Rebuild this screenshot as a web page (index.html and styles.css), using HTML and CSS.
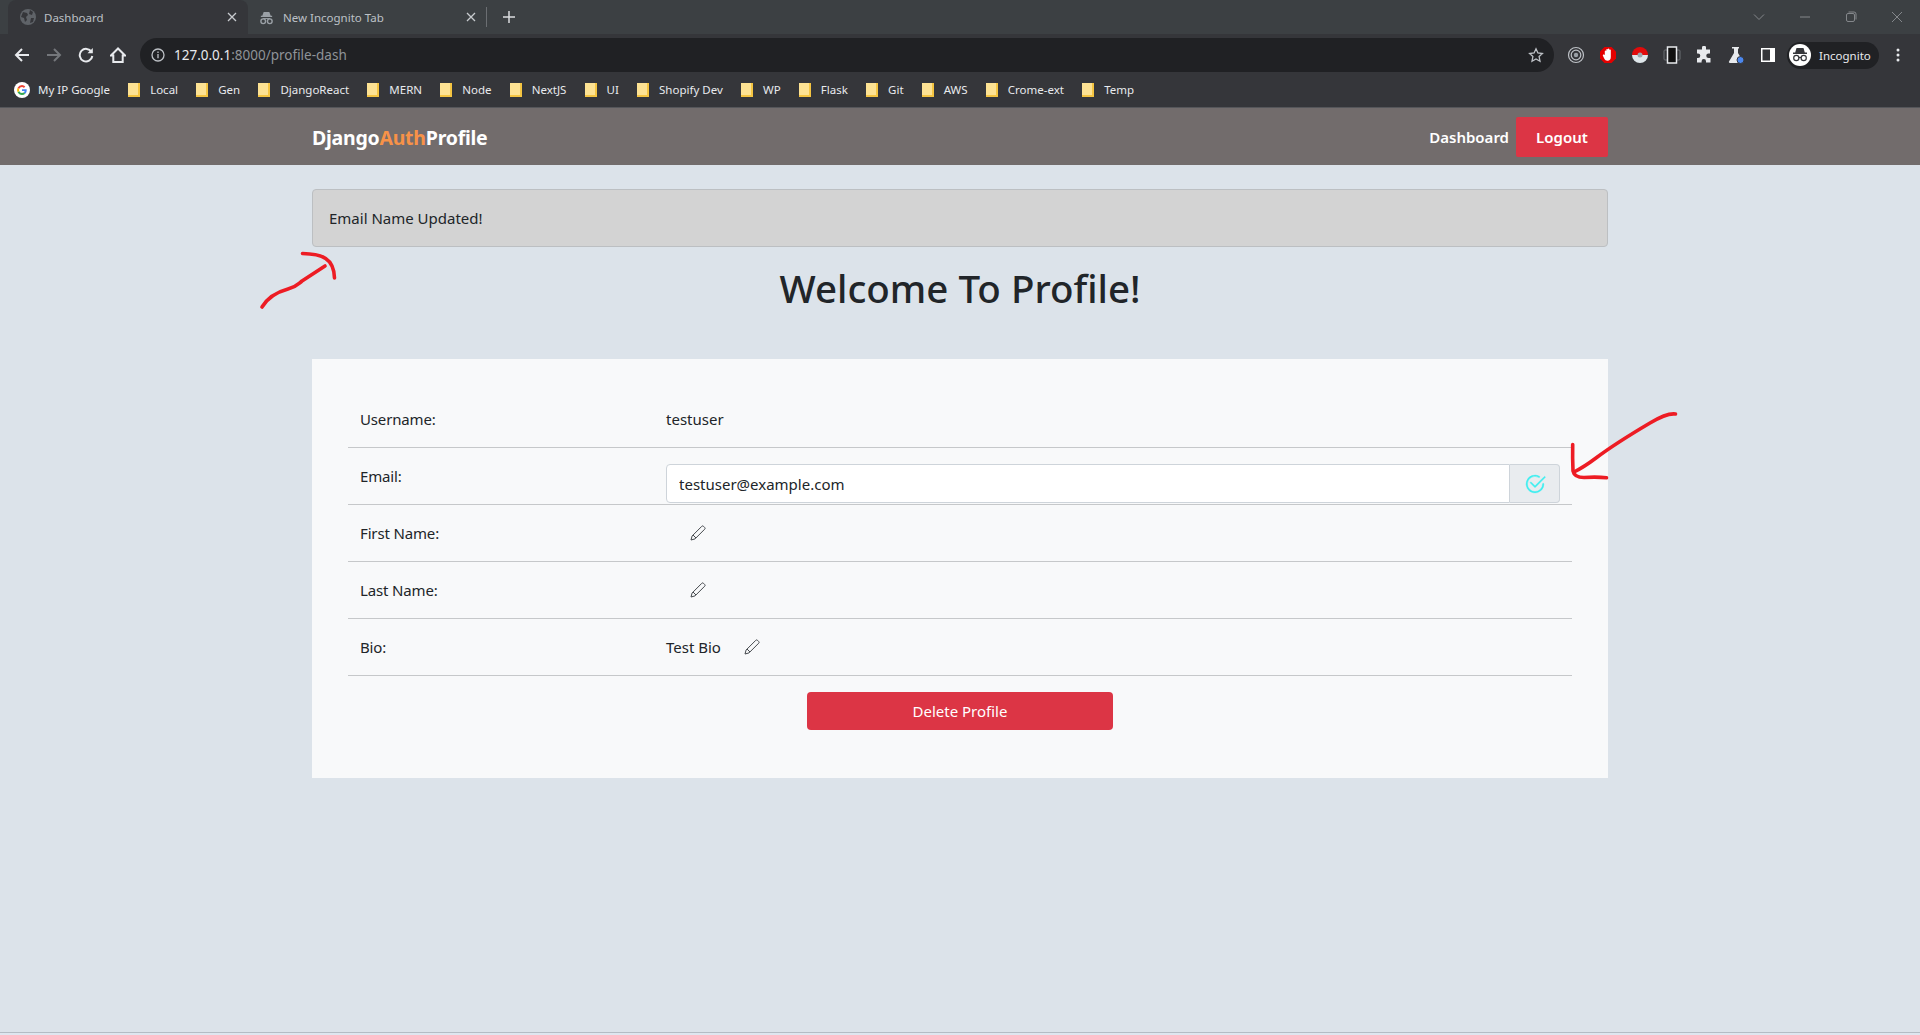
FILE: index.html
```html
<!DOCTYPE html>
<html lang="en">
<head>
<meta charset="utf-8">
<title>Dashboard</title>
<link rel="stylesheet" href="styles.css">
</head>
<body>
<header class="chrome">
  <div class="tabstrip">
    <div class="tab tab-active">
      <svg class="tab-ico" viewBox="0 0 16 16"><circle cx="8" cy="8" r="8" fill="#5f6368"/><path d="M3 3l4 1 1 2-2 2 1 3-2 2-1-4-3-1zM10 1l3 2-1 3-3-1zM11 9l3 0-1 4-3 1z" fill="#35363a"/></svg>
      <span class="tab-title">Dashboard</span>
      <svg class="tab-close" viewBox="0 0 10 10"><path d="M1 1l8 8M9 1l-8 8"/></svg>
    </div>
    <div class="tab tab-idle">
      <svg class="tab-ico" viewBox="0 0 16 16"><path d="M5 2h6l1.500 4H14v1.500H2V6h1.500z" fill="#9aa0a6"/><circle cx="4.500" cy="12" r="2.500" fill="none" stroke="#9aa0a6" stroke-width="1.500"/><circle cx="11.500" cy="12" r="2.500" fill="none" stroke="#9aa0a6" stroke-width="1.500"/><path d="M4 8.500h8v1H4z" fill="#9aa0a6"/></svg>
      <span class="tab-title">New Incognito Tab</span>
      <svg class="tab-close" viewBox="0 0 10 10"><path d="M1 1l8 8M9 1l-8 8"/></svg>
    </div>
    <span class="tab-sep"></span>
    <svg class="tab-new" viewBox="0 0 12 12"><path d="M6 0v12M0 6h12"/></svg>
    <div class="winctl">
      <svg class="win win-chev" viewBox="0 0 12 12"><path d="M1 3.500l5 5 5-5"/></svg>
      <svg class="win" viewBox="0 0 12 12"><path d="M1 6h10"/></svg>
      <svg class="win" viewBox="0 0 12 12"><rect x="1.500" y="2.500" width="8" height="8" rx="1.500"/><path d="M3.500 1h5.500a2 2 0 0 1 2 2v5.500"/></svg>
      <svg class="win" viewBox="0 0 12 12"><path d="M1 1l10 10M11 1l-10 10"/></svg>
    </div>
  </div>
  <div class="toolbar">
    <svg class="nav-ico" viewBox="0 0 16 16"><path d="M15 8H2M8 2L2 8l6 6"/></svg>
    <svg class="nav-ico nav-dim" viewBox="0 0 16 16"><path d="M1 8h13M8 2l6 6-6 6"/></svg>
    <svg class="nav-ico" viewBox="0 0 16 16"><path d="M13.500 5A6.300 6.300 0 1 0 14.300 9"/><path class="fill" d="M14.800 1v5.300H9.500z"/></svg>
    <svg class="nav-ico" viewBox="0 0 16 16"><path d="M8 1.500L1 8.500h2.300V15h9.400V8.500H15z"/></svg>
    <div class="omnibox">
      <svg class="info" viewBox="0 0 14 14"><circle cx="7" cy="7" r="6"/><path d="M7 6v4.300M7 3.500v1.500"/></svg>
      <span class="url"><span class="url-host">127.0.0.1</span>:8000/profile-dash</span>
      <svg class="star" viewBox="0 0 16 16"><path d="M8 1.800l1.900 4.200 4.500.5-3.300 3.100.9 4.600L8 11.900l-4 2.300.9-4.600L1.600 6.500l4.500-.5z"/></svg>
    </div>
    <div class="exts">
      <svg class="ext" viewBox="0 0 18 18"><circle cx="9" cy="9" r="7.500" fill="none" stroke="#bdc1c6" stroke-width="1.200"/><circle cx="9" cy="9" r="4.800" fill="none" stroke="#bdc1c6" stroke-width="1.200"/><circle cx="9" cy="9" r="2.200" fill="#9aa0a6"/></svg>
      <svg class="ext" viewBox="0 0 18 18"><path d="M5.500 1h7L17 5.500v7L12.500 17h-7L1 12.500v-7z" fill="#e40000"/><path d="M5.800 8.500V5a.8.8 0 0 1 1.500 0V3.500a.8.8 0 0 1 1.500 0V3a.8.8 0 0 1 1.500 0v1a.8.8 0 0 1 1.500 0v7c0 2.500-1.300 3.800-3.300 3.800-1.600 0-2.500-.7-3.300-2.200L3.900 9.800c-.5-1 .8-1.800 1.400-.9z" fill="#fff"/></svg>
      <svg class="ext" viewBox="0 0 18 18"><path d="M1 9a8 8 0 0 1 16 0z" fill="#e20b0b"/><path d="M1 9a8 8 0 0 0 16 0z" fill="#dfe7ea"/><circle cx="9" cy="9" r="2.500" fill="#9aa6ad"/></svg>
      <svg class="ext" viewBox="0 0 18 18"><rect x="1" y="4" width="16" height="10" rx="1" fill="none" stroke="#6b6e72"/><rect x="4.500" y="1" width="9" height="16" fill="#111" stroke="#e8eaed" stroke-width="1.500"/></svg>
      <svg class="ext" viewBox="0 0 18 18"><path d="M7 1.500a2 2 0 0 1 4 .5v1.500h4v4h-1.500a2.200 2.200 0 0 0 0 4.500H15.500V16.500h-4.500v-1.300a2.200 2.200 0 0 0-4.400 0v1.300H2v-4.500h1a2.300 2.300 0 0 0 0-4.600H2V3.500h5z" fill="#e8eaed"/></svg>
      <svg class="ext" viewBox="0 0 18 18"><path d="M5 1h7v1.500h-1v4.500l5 8.500a1 1 0 0 1-1 1.500H3a1 1 0 0 1-1-1.500L7 7V2.500H5z" fill="#e8eaed"/><circle cx="13.500" cy="14" r="3.500" fill="#4b87ee" stroke="#35363a"/></svg>
      <svg class="ext" viewBox="0 0 18 18"><rect x="2" y="2" width="14" height="14" fill="#fff"/><rect x="3.500" y="3.500" width="7.500" height="11" fill="#35363a"/></svg>
    </div>
    <div class="profile">
      <span class="avatar"><svg viewBox="0 0 22 22"><path d="M7.500 4h7l1.300 4.500H18V10H4V8.500h2.200z" fill="#35363a"/><circle cx="7.300" cy="14" r="2.600" fill="none" stroke="#35363a" stroke-width="1.200"/><circle cx="14.700" cy="14" r="2.600" fill="none" stroke="#35363a" stroke-width="1.200"/><path d="M9.900 13.500h2.200" stroke="#35363a" stroke-width="1.200"/></svg></span>
      <span class="profile-name">Incognito</span>
    </div>
    <svg class="kebab" viewBox="0 0 4 14"><circle cx="2" cy="2" r="1.500"/><circle cx="2" cy="7" r="1.500"/><circle cx="2" cy="12" r="1.500"/></svg>
  </div>
  <div class="bookmarks">
    <a class="bm bm-g"><svg class="g-logo" viewBox="0 0 16 16"><circle cx="8" cy="8" r="8" fill="#fff"/><path d="M12.700 8.200c0-.4 0-.7-.1-1H8v1.900h2.700a2.300 2.300 0 0 1-1 1.500l1.600 1.200c.9-.9 1.400-2.100 1.400-3.600z" fill="#4285f4"/><path d="M8 13c1.300 0 2.400-.4 3.300-1.200l-1.600-1.200c-.4.300-1 .5-1.700.5-1.300 0-2.400-.9-2.800-2l-1.600 1.200C4.400 11.900 6 13 8 13z" fill="#34a853"/><path d="M5.200 9.100a3 3 0 0 1 0-2L3.600 5.800a5 5 0 0 0 0 4.500z" fill="#fbbc05"/><path d="M8 5.100c.7 0 1.400.3 1.900.8l1.400-1.400A4.800 4.800 0 0 0 8 3a5 5 0 0 0-4.400 2.800l1.600 1.300c.4-1.200 1.500-2 2.800-2z" fill="#ea4335"/></svg><span>My IP Google</span></a>
    <a class="bm"><i class="folder"></i><span>Local</span></a>
    <a class="bm"><i class="folder"></i><span>Gen</span></a>
    <a class="bm"><i class="folder"></i><span>DjangoReact</span></a>
    <a class="bm"><i class="folder"></i><span>MERN</span></a>
    <a class="bm"><i class="folder"></i><span>Node</span></a>
    <a class="bm"><i class="folder"></i><span>NextJS</span></a>
    <a class="bm"><i class="folder"></i><span>UI</span></a>
    <a class="bm"><i class="folder"></i><span>Shopify Dev</span></a>
    <a class="bm"><i class="folder"></i><span>WP</span></a>
    <a class="bm"><i class="folder"></i><span>Flask</span></a>
    <a class="bm"><i class="folder"></i><span>Git</span></a>
    <a class="bm"><i class="folder"></i><span>AWS</span></a>
    <a class="bm"><i class="folder"></i><span>Crome-ext</span></a>
    <a class="bm"><i class="folder"></i><span>Temp</span></a>
  </div>
</header>

<nav class="navbar">
  <div class="container navbar-inner">
    <a class="brand">Django<span class="brand-accent">Auth</span>Profile</a>
    <div class="nav-right">
      <a class="nav-link">Dashboard</a>
      <a class="btn btn-logout">Logout</a>
    </div>
  </div>
</nav>

<main class="page">
  <div class="container">
    <div class="alert">Email Name Updated!</div>
    <h1 class="title">Welcome To Profile!</h1>
    <section class="card">
      <div class="row"><div class="lbl">Username:</div><div class="val">testuser</div></div>
      <div class="row row-form">
        <div class="lbl lbl-top">Email:</div>
        <div class="val val-form">
          <div class="input-group">
            <input class="input" type="text" value="testuser@example.com">
            <span class="addon"><svg class="check" viewBox="0 0 16 16"><path d="M2.500 8a5.500 5.500 0 0 1 8.250-4.764.5.500 0 0 0 .500-.866A6.500 6.500 0 1 0 14.500 8a.5.500 0 0 0-1 0 5.500 5.500 0 1 1-11 0z"/><path d="M15.354 3.354a.5.500 0 0 0-.708-.708L8 9.293 5.354 6.646a.5.500 0 1 0-.708.708l3 3a.5.500 0 0 0 .708 0l7-7z"/></svg></span>
          </div>
        </div>
      </div>
      <div class="row"><div class="lbl">First Name:</div><div class="val"><span class="edit"><svg class="pencil" viewBox="0 0 16 16"><path d="M11.800 1.300a1.200 1.200 0 0 1 1.700 0l1.200 1.200a1.200 1.200 0 0 1 0 1.700L5 13.900 1 15l1.100-4zM3 10l3 3"/></svg></span></div></div>
      <div class="row"><div class="lbl">Last Name:</div><div class="val"><span class="edit"><svg class="pencil" viewBox="0 0 16 16"><path d="M11.800 1.300a1.200 1.200 0 0 1 1.700 0l1.200 1.200a1.200 1.200 0 0 1 0 1.700L5 13.900 1 15l1.100-4zM3 10l3 3"/></svg></span></div></div>
      <div class="row"><div class="lbl">Bio:</div><div class="val">Test Bio<span class="edit edit-after"><svg class="pencil" viewBox="0 0 16 16"><path d="M11.800 1.300a1.200 1.200 0 0 1 1.700 0l1.200 1.200a1.200 1.200 0 0 1 0 1.700L5 13.900 1 15l1.100-4zM3 10l3 3"/></svg></span></div></div>
      <div class="actions"><a class="btn btn-delete">Delete Profile</a></div>
    </section>
  </div>
</main>

<svg class="ink" viewBox="0 0 1920 1035">
  <path d="M262 307C268 297 277 292 288 289C296 287 297 285 302 281L325 266"/>
  <path d="M302.500 253.500C322 254 334 258 334.500 278"/>
  <path d="M1675.500 414C1668 413 1660 417 1650 423C1628 436 1612 446 1596 458C1588 464 1580 469 1574 472"/>
  <path d="M1572.700 444.500C1572.500 455 1572.700 464 1573 471C1574 476 1578 477.500 1584 477.500C1592 477 1600 477 1606.500 477.800"/>
</svg>
<div class="bottom-line"></div>
</body>
</html>
```

FILE: styles.css
```css
* { box-sizing: border-box; }
html, body { margin: 0; padding: 0; height: 100%; overflow: hidden; }
body {
  position: relative;
  background: #dce3ea;
  font-family: "Noto Sans", "Open Sans", sans-serif;
  font-size: 16px;
  color: #212529;
  display: flex;
  flex-direction: column;
}
svg { display: block; flex: none; }

/* Browser chrome */
.chrome { background: #35363a; height: 108px; flex: none; border-bottom: 1px solid #55565a; color: #e8eaed; }
.tabstrip { height: 34px; background: #3c4043; display: flex; align-items: center; padding-left: 8px; }
.tab { height: 34px; width: 240px; display: flex; align-items: center; font-size: 11.5px; color: #bdc1c6; }
.tab-active { background: #35363a; border-radius: 8px 8px 0 0; padding: 0 10px 0 12px; }
.tab-idle { padding: 0 11px 0 11px; }
.tab-ico { width: 16px; height: 16px; margin-right: 8px; }
.tab-idle .tab-ico { width: 15px; height: 15px; margin-right: 9px; }
.tab-title { flex: 1; white-space: nowrap; }
.tab-close { width: 10px; height: 10px; fill: none; stroke: #c8cbcf; stroke-width: 1.300; margin-right: 1px; }
.tab-sep { width: 1px; height: 20px; background: #6b6e72; margin-left: -2px; }
.tab-new { width: 12px; height: 12px; margin-left: 16px; fill: none; stroke: #dadce0; stroke-width: 1.500; }
.winctl { margin-left: auto; display: flex; align-items: center; }
.win { width: 12px; height: 12px; margin-right: 34px; fill: none; stroke: #84878b; stroke-width: 1; }
.winctl .win:last-child { margin-right: 17px; }
.win-chev { margin-right: 34px; }

.toolbar { height: 38px; display: flex; align-items: center; padding: 4px 0 0 14px; }
.nav-ico { width: 16px; height: 16px; margin-right: 16px; fill: none; stroke: #e8eaed; stroke-width: 2; }
.nav-ico .fill { fill: #e8eaed; stroke: none; }
.nav-dim { stroke: #74777b; }
.omnibox { width: 1414px; height: 34px; margin-left: -2px; border-radius: 17px; background: #202124; display: flex; align-items: center; padding: 0 10px 0 11px; font-size: 13.5px; color: #8f9398; }
.info { width: 14px; height: 14px; margin-right: 9px; fill: none; stroke: #bdc1c6; stroke-width: 1.300; }
.url { flex: 1; white-space: nowrap; }
.url-host { color: #e8eaed; }
.star { width: 16px; height: 16px; fill: none; stroke: #bdc1c6; stroke-width: 1.300; }
.exts { display: flex; align-items: center; gap: 14px; margin-left: 13px; }
.ext { width: 18px; height: 18px; }
.profile { margin-left: 10px; width: 92px; height: 27px; border-radius: 14px; background: #202124; display: flex; align-items: center; padding-left: 2px; font-size: 11.5px; color: #e8eaed; }
.avatar { width: 22px; height: 22px; border-radius: 50%; background: #fff; margin-right: 8px; }
.avatar svg { width: 22px; height: 22px; }
.kebab { width: 4px; height: 14px; margin-left: 17px; fill: #e8eaed; }

.bookmarks { height: 35px; display: flex; align-items: center; padding-left: 14px; font-size: 11.5px; color: #e8eaed; margin-top: 0; }
.bm { display: flex; align-items: center; margin-right: 18.200px; white-space: nowrap; }
.g-logo { width: 16px; height: 16px; margin-right: 8px; }
.folder { width: 12px; height: 14px; margin-right: 10px; background: #fde293; border: 1px solid #f5c542; border-width: 0 2px 2px 0; display: block; flex: none; }

/* Navbar */
.container { width: 1296px; margin: 0 auto; }
.navbar { height: 57px; flex: none; background: #726c6c; }
.navbar-inner { height: 100%; display: flex; align-items: center; justify-content: space-between; }
.brand { font-size: 19.500px; font-weight: 700; letter-spacing: -0.250px; color: #fff; padding-top: 1px; }
.brand-accent { color: #f79248; }
.nav-right { display: flex; align-items: center; gap: 7px; }
.nav-link { color: #fff; font-weight: 600; font-size: 15px; }
.btn { display: flex; align-items: center; justify-content: center; color: #fff; background: #dc3545; border-radius: 2px; }
.btn-logout { width: 92px; height: 40px; font-weight: 600; font-size: 15px; }

/* Page */
.page { flex: 1; padding-top: 24px; }
.alert { height: 58px; background: #d3d3d3; border: 1px solid #bcbfc2; border-radius: 4px; padding: 0 16px; display: flex; align-items: center; font-size: 15px; }
.title { margin: 17px 0 47px; height: 48px; line-height: 48px; text-align: center; font-size: 38.500px; font-weight: 500; }
.card { background: #f8f9fa; padding: 32px 36px 48px; height: 419px; }
.row { display: flex; height: 57px; border-bottom: 1px solid #c6c8ca; align-items: center; font-size: 15px; }
.lbl { width: 306px; padding-left: 12px; flex: none; letter-spacing: -0.150px; }
.lbl-top { align-self: flex-start; padding-top: 18px; }
.val { flex: 1; padding-left: 12px; display: flex; align-items: center; }
.val-form { padding-right: 12px; padding-bottom: 1px; align-self: flex-end; }
.row-form { align-items: flex-end; }
.input-group { display: flex; width: 100%; height: 39px; }
.input { flex: 1; min-width: 0; border: 1px solid #ced4da; border-radius: 4px 0 0 4px; background: #fff; padding: 0 12px; font: inherit; color: #212529; outline: none; }
.addon { width: 50px; border: 1px solid #ced4da; border-left: 0; border-radius: 0 4px 4px 0; background: #e9ecef; display: flex; align-items: center; justify-content: center; }
.check { width: 22px; height: 22px; fill: #3deff0; stroke: #3deff0; stroke-width: 0.300; }
.edit { display: block; margin-left: 24px; }
.edit-after { margin-left: 23px; }
.pencil { width: 16px; height: 16px; fill: none; stroke: #45494d; stroke-width: 1; }
.actions { display: flex; justify-content: center; padding-top: 16px; }
.btn-delete { width: 306px; height: 38px; font-size: 15px; border-radius: 4px; }

/* Hand-drawn annotations lying over the page */
.ink { position: absolute; left: 0; top: 0; width: 1920px; height: 1035px; fill: none; stroke: #ed1c24; stroke-width: 3.600; stroke-linecap: round; stroke-linejoin: round; pointer-events: none; }
.bottom-line { position: absolute; left: 0; right: 0; bottom: 0; height: 3px; border-top: 1px solid #b4bcc4; background: #dfe6ef; }
```
